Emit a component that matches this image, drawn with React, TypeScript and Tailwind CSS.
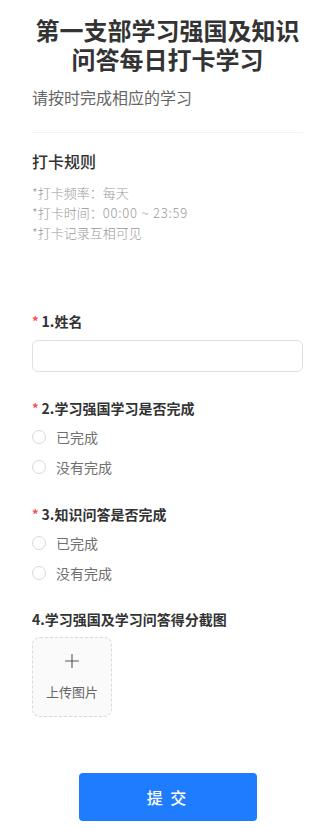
import { Plus } from "lucide-react"

const font = "font-['Noto_Sans_CJK_SC','Noto_Sans',sans-serif]"

function Label({ text, required }: { text: string; required?: boolean }) {
  return (
    <div className="flex items-center h-5 text-[14px] leading-5 font-semibold text-[#333]">
      {required && <span className="text-[#ff4d4f] mr-[3px] text-[13px]">*</span>}
      <span>{text}</span>
    </div>
  )
}

function Radio({ text }: { text: string }) {
  return (
    <label className="flex items-center h-[30px]">
      <span className="w-[14px] h-[14px] rounded-full border border-[#d9d9d9] bg-white" />
      <span className="ml-[10px] text-[14px] text-[#707070]">{text}</span>
    </label>
  )
}

function RadioQuestion({ title }: { title: string }) {
  return (
    <div>
      <Label text={title} required />
      <div className="mt-1 flex flex-col">
        <Radio text="已完成" />
        <Radio text="没有完成" />
      </div>
    </div>
  )
}

export default function App() {
  return (
    <div className={`${font} bg-white min-h-screen px-8 pt-4 pb-4`}>
      <h1 className="text-[24px] leading-[28.5px] font-bold text-center text-[#333]">
        第一支部学习强国及知识问答每日打卡学习
      </h1>
      <p className="mt-3 text-[16px] leading-6 text-[#666]">请按时完成相应的学习</p>
      <div className="mt-[23px] h-px bg-[#f2f2f2]" />

      <h2 className="mt-4 text-[16px] leading-6 font-medium text-[#333]">打卡规则</h2>
      <div className="mt-[10px] text-[13px] leading-5 font-light text-[#999]">
        <p>*打卡频率：每天</p>
        <p>
          *打卡时间：<span className="tracking-[0.8px]">00:00 ~ 23:59</span>
        </p>
        <p>*打卡记录互相可见</p>
      </div>

      <div className="mt-[68px]">
        <Label text="1.姓名" required />
        <input
          type="text"
          className="mt-[9px] block w-full h-8 rounded-md border border-[#e0e0e0] px-3 text-[14px] outline-none"
        />
      </div>

      <div className="mt-[26px]">
        <RadioQuestion title="2.学习强国学习是否完成" />
      </div>

      <div className="mt-[22px]">
        <RadioQuestion title="3.知识问答是否完成" />
      </div>

      <div className="mt-[21px]">
        <Label text="4.学习强国及学习问答得分截图" />
        <div className="mt-2 w-20 h-20 pb-1 rounded-lg border border-dashed border-[#d9d9d9] bg-[#fafafa] flex flex-col items-center justify-center">
          <Plus className="w-[22px] h-[22px] text-[#555]" strokeWidth={1.2} />
          <span className="mt-[12px] text-[13px] leading-4 text-[#666]">上传图片</span>
        </div>
      </div>

      <div className="mt-14 flex justify-center">
        <button className="w-[178px] h-12 rounded bg-[#1f7cff] text-white text-[16px] font-medium tracking-[2px]">
          提 交
        </button>
      </div>
    </div>
  )
}
